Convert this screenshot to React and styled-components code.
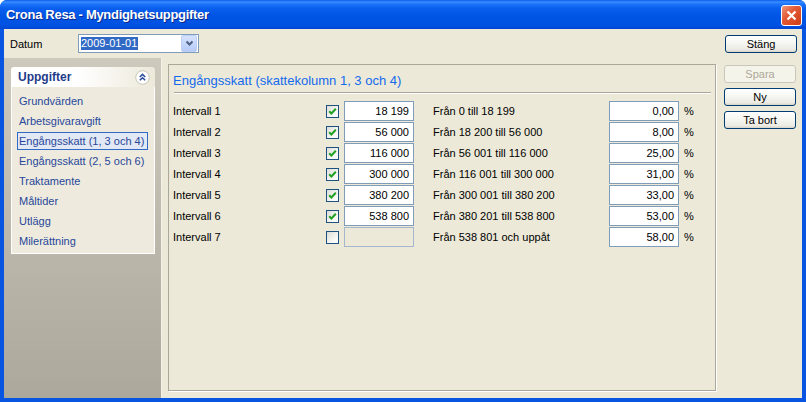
import { Fragment } from 'react';
import styled, { createGlobalStyle } from 'styled-components';

const GlobalStyle = createGlobalStyle`
  html, body { margin: 0; padding: 0; background: #ffffff; }
  body {
    font-family: "Liberation Sans", Arial, sans-serif;
    font-size: 11px;
    color: #000;
  }
`;

const tasks = [
  'Grundvärden',
  'Arbetsgivaravgift',
  'Engångsskatt (1, 3 och 4)',
  'Engångsskatt (2, 5 och 6)',
  'Traktamente',
  'Måltider',
  'Utlägg',
  'Milerättning',
];

const rows = [
  { label: 'Intervall 1', on: true, amount: '18 199', text: 'Från 0 till 18 199', pct: '0,00' },
  { label: 'Intervall 2', on: true, amount: '56 000', text: 'Från 18 200 till 56 000', pct: '8,00' },
  { label: 'Intervall 3', on: true, amount: '116 000', text: 'Från 56 001 till 116 000', pct: '25,00' },
  { label: 'Intervall 4', on: true, amount: '300 000', text: 'Från 116 001 till 300 000', pct: '31,00' },
  { label: 'Intervall 5', on: true, amount: '380 200', text: 'Från 300 001 till 380 200', pct: '33,00' },
  { label: 'Intervall 6', on: true, amount: '538 800', text: 'Från 380 201 till 538 800', pct: '53,00' },
  { label: 'Intervall 7', on: false, amount: '', text: 'Från 538 801 och uppåt', pct: '58,00' },
];

const Window = styled.div`
  width: 806px;
  height: 402px;
  display: flex;
  flex-direction: column;
  border-radius: 7px 7px 0 0;
  overflow: hidden;
  background: #0855e2;
`;

const TitleBar = styled.div`
  height: 29px;
  flex: none;
  display: flex;
  align-items: center;
  justify-content: space-between;
  padding: 0 4px 0 6px;
  background: linear-gradient(
    to bottom,
    #0a5deb 0%,
    #3b8dfd 7%,
    #1c74fa 14%,
    #0a5fee 28%,
    #0055e5 55%,
    #0053e2 85%,
    #0046d6 100%
  );
`;

const Title = styled.span`
  color: #fff;
  font-weight: bold;
  font-size: 13px;
  letter-spacing: -0.3px;
  text-shadow: 1px 1px 0 #0b2a8a;
`;

const CloseBtn = styled.div`
  width: 19px;
  height: 19px;
  margin-top: 2px;
  border: 1px solid #fff;
  border-radius: 3px;
  background: linear-gradient(135deg, #f0977c 0%, #e25a36 40%, #cf3c14 100%);
  display: flex;
  align-items: center;
  justify-content: center;
`;

const Body = styled.div`
  flex: 1;
  margin: 0 4px 4px;
  background: #ece9d8;
  display: flex;
  flex-direction: column;
  min-height: 0;
`;

const Toolbar = styled.div`
  height: 29px;
  flex: none;
  display: flex;
  align-items: center;
  padding: 0 5px 0 6px;
`;

const FieldLabel = styled.span`
  width: 68px;
`;

const Combo = styled.div`
  width: 117px;
  height: 17px;
  border: 1px solid #7f9db9;
  background: #fff;
  display: flex;
  align-items: center;
  justify-content: space-between;
  padding-left: 2px;
`;

const Selected = styled.span`
  background: #316ac5;
  color: #fff;
  line-height: 13px;
  padding-right: 1px;
`;

const ComboButton = styled.div`
  width: 14px;
  height: 15px;
  margin-right: 1px;
  border: 1px solid #bccff7;
  border-radius: 2px;
  background: linear-gradient(to bottom, #d6e3fe, #b6cbf7);
  display: flex;
  align-items: center;
  justify-content: center;
`;

const Spacer = styled.div`
  flex: 1;
`;

const Button = styled.div`
  width: 70px;
  height: 16px;
  border: 1px solid ${p => (p.disabled ? '#c9c7ba' : '#003c74')};
  border-radius: 3px;
  background: ${p =>
    p.disabled
      ? '#f5f4ea'
      : 'linear-gradient(to bottom, #ffffff 0%, #f6f6f2 45%, #ebeae3 85%, #d8d4c8 100%)'};
  color: ${p => (p.disabled ? '#aca899' : '#000')};
  display: flex;
  align-items: center;
  justify-content: center;
  font-size: 11px;
`;

const Main = styled.div`
  flex: 1;
  display: flex;
  min-height: 0;
`;

const SidePanel = styled.div`
  width: 158px;
  flex: none;
  padding: 9px 7px 0;
  box-sizing: border-box;
  background: linear-gradient(to bottom, #cdc9bc, #aca89b);
  border-right: 1px solid #f3f1e8;
`;

const TaskBox = styled.div`
  width: 144px;
`;

const TaskHeader = styled.div`
  height: 20px;
  border-radius: 3px 3px 0 0;
  background: linear-gradient(to right, #ffffff 45%, #ece9da 100%);
  display: flex;
  align-items: center;
  justify-content: space-between;
  padding: 0 5px 0 7px;
  font-size: 12px;
  font-weight: bold;
  color: #1f3c8a;
`;

const TaskBody = styled.div`
  border: 1px solid #fff;
  border-top: none;
  background: #eeebde;
  padding: 5px 6px 3px 5px;
  display: flex;
  flex-direction: column;
  gap: 2px;
`;

const TaskItem = styled.div`
  height: 16px;
  line-height: 16px;
  padding-left: 1px;
  border: 1px solid ${p => (p.active ? '#316ac5' : 'transparent')};
  background: ${p => (p.active ? '#e2e8f4' : 'transparent')};
  color: #27479a;
  white-space: nowrap;
`;

const Content = styled.div`
  flex: 1;
  display: flex;
  gap: 8px;
  padding: 6px 5px 7px 6px;
  min-width: 0;
`;

const GroupBox = styled.div`
  flex: 1;
  border: 1px solid #aca899;
  box-shadow: 1px 1px 0 #fff;
  padding: 8px 4px 0 4px;
`;

const GroupTitle = styled.div`
  font-size: 13px;
  line-height: 16px;
  color: #1469ee;
`;

const Rule = styled.div`
  height: 1px;
  margin: 3px 0 0 1px;
  background: #aca899;
  border-bottom: 1px solid #fff;
`;

const Grid = styled.div`
  margin-top: 7px;
  display: grid;
  grid-template-columns: 153px 18px 70px 195px 70px auto;
  grid-auto-rows: 20px;
  row-gap: 1px;
  align-items: center;
`;

const Desc = styled.span`
  padding-left: ${p => p.indent || 0}px;
  white-space: nowrap;
`;

const Check = styled.div`
  width: 11px;
  height: 11px;
  border: 1px solid #1c5180;
  background: linear-gradient(135deg, #dcdcd7 0%, #f5f5f2 60%, #ffffff 100%);
  display: flex;
  align-items: center;
  justify-content: center;
`;

const Field = styled.div`
  height: 18px;
  line-height: 18px;
  border: 1px solid ${p => (p.disabled ? '#a4b7cd' : '#7f9db9')};
  background: ${p => (p.disabled ? '#ece9d8' : '#fff')};
  text-align: right;
  padding-right: 4px;
`;

const ButtonColumn = styled.div`
  width: 73px;
  display: flex;
  flex-direction: column;
  gap: 5px;
  padding-top: 1px;
`;

function CheckMark() {
  return (
    <svg width="9" height="9" viewBox="0 0 9 9">
      <path d="M1.2 4.2 L3.4 6.5 L7.8 1.8" fill="none" stroke="#21a121" strokeWidth="2" />
    </svg>
  );
}

export default function App() {
  return (
    <>
      <GlobalStyle />
      <Window>
        <TitleBar>
          <Title>Crona Resa - Myndighetsuppgifter</Title>
          <CloseBtn>
            <svg width="11" height="11" viewBox="0 0 11 11">
              <path d="M1.5 1.5 L9.5 9.5 M9.5 1.5 L1.5 9.5" stroke="#fff" strokeWidth="2.2" />
            </svg>
          </CloseBtn>
        </TitleBar>
        <Body>
          <Toolbar>
            <FieldLabel>Datum</FieldLabel>
            <Combo>
              <Selected>2009-01-01</Selected>
              <ComboButton>
                <svg width="9" height="7" viewBox="0 0 9 7">
                  <path d="M1.5 1.5 L4.5 4.5 L7.5 1.5" fill="none" stroke="#4d6185" strokeWidth="2" />
                </svg>
              </ComboButton>
            </Combo>
            <Spacer />
            <Button>Stäng</Button>
          </Toolbar>
          <Main>
            <SidePanel>
              <TaskBox>
                <TaskHeader>
                  Uppgifter
                  <svg width="15" height="15" viewBox="0 0 15 15">
                    <circle cx="7.5" cy="7.5" r="6.8" fill="#fff" stroke="#c8c5b5" strokeWidth="1" />
                    <path
                      d="M4.8 7 L7.5 4.4 L10.2 7 M4.8 10.3 L7.5 7.7 L10.2 10.3"
                      fill="none"
                      stroke="#2a4a9c"
                      strokeWidth="1.5"
                    />
                  </svg>
                </TaskHeader>
                <TaskBody>
                  {tasks.map((t, i) => (
                    <TaskItem key={t} active={i === 2}>
                      {t}
                    </TaskItem>
                  ))}
                </TaskBody>
              </TaskBox>
            </SidePanel>
            <Content>
              <GroupBox>
                <GroupTitle>Engångsskatt (skattekolumn 1, 3 och 4)</GroupTitle>
                <Rule />
                <Grid>
                  {rows.map(r => (
                    <Fragment key={r.label}>
                      <Desc>{r.label}</Desc>
                      <Check>{r.on && <CheckMark />}</Check>
                      <Field disabled={!r.on}>{r.amount}</Field>
                      <Desc indent={19}>{r.text}</Desc>
                      <Field>{r.pct}</Field>
                      <Desc indent={5}>%</Desc>
                    </Fragment>
                  ))}
                </Grid>
              </GroupBox>
              <ButtonColumn>
                <Button disabled>Spara</Button>
                <Button>Ny</Button>
                <Button>Ta bort</Button>
              </ButtonColumn>
            </Content>
          </Main>
        </Body>
      </Window>
    </>
  );
}
